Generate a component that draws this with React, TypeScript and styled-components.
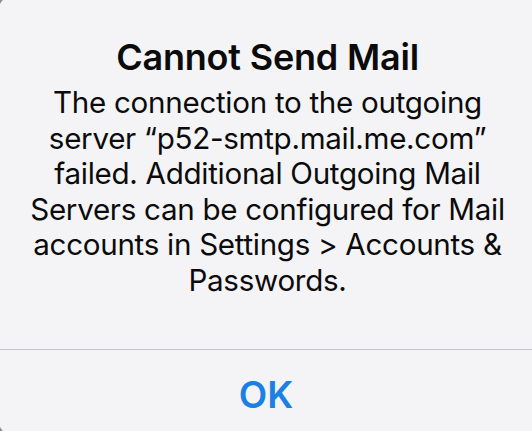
import React from 'react';
import styled, { createGlobalStyle } from 'styled-components';

const GlobalStyle = createGlobalStyle`
    html, body {
        margin: 0;
        padding: 0;
        width: 532px;
        height: 431px;
        overflow: hidden;
        background-color: #8d8d90;
    }
    #root {
        height: 100%;
    }
`;

const Alert = styled.div`
    display: flex;
    flex-direction: column;
    height: 445px;
    margin: -7px 0 0 -3px;
    width: 545px;
    background-color: #f4f4f6;
    border-radius: 22px;
    font-family: Inter, 'Noto Sans', sans-serif;
    color: #0b0b0b;
`;

const Content = styled.div`
    display: flex;
    flex-direction: column;
    align-items: center;
    padding: 44px 0 0 3px;
    height: 356px;
    box-sizing: border-box;
    width: 532px;
    margin-left: 3px;
    text-align: center;
`;

const Title = styled.h1`
    margin: 0;
    font-size: 36px;
    font-weight: 600;
    line-height: 40px;
    letter-spacing: -0.2px;
`;

const Message = styled.p`
    margin: 8px 0 0;
    font-size: 29.6px;
    font-weight: 400;
    line-height: 35.6px;
    width: 490px;
    letter-spacing: -0.3px;
`;

const Divider = styled.div`
    height: 1px;
    background-color: #c4c4c9;
`;

const Button = styled.button`
    display: flex;
    align-items: center;
    justify-content: center;
    height: 88px;
    width: 532px;
    margin-left: 3px;
    border: none;
    background: transparent;
    font-family: inherit;
    font-size: 37px;
    font-weight: 600;
    color: #1a80e4;
    padding: 0;
`;

export default function App() {
    return (
        <>
            <GlobalStyle />
            <Alert>
                <Content>
                    <Title>Cannot Send Mail</Title>
                    <Message>
                        The connection to the outgoing server “p52-smtp.mail.me.com” failed. Additional Outgoing Mail Servers can be configured for Mail accounts in Settings &gt; Accounts &amp; Passwords.
                    </Message>
                </Content>
                <Divider />
                <Button>OK</Button>
            </Alert>
        </>
    );
}
